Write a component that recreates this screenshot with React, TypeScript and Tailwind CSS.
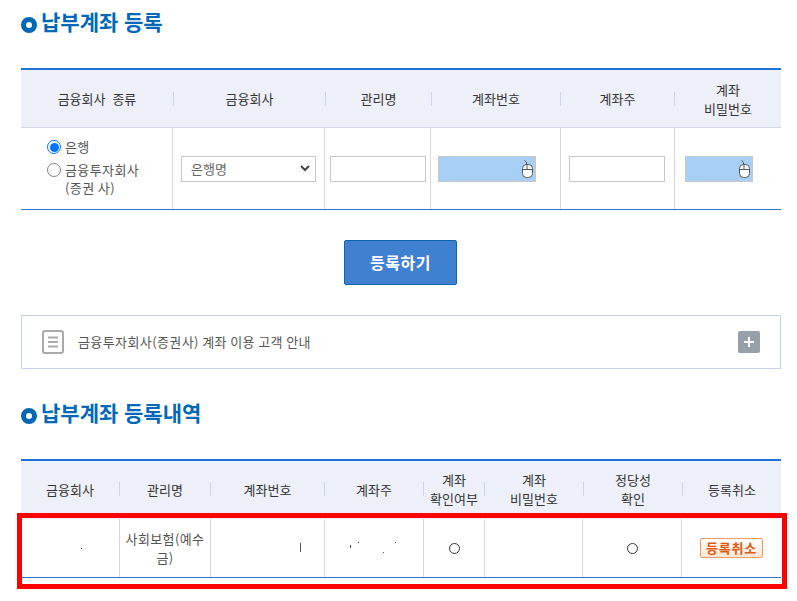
const font = { fontFamily: '"Noto Sans CJK KR", "Noto Sans", sans-serif' };

function Heading({ children }: { children: string }) {
  return (
    <h2 className="flex items-center text-[21px] font-bold leading-[30px] text-[#0068b7] [word-spacing:1px]">
      <span className="mr-[4px] mt-[8px] h-[16px] w-[16px] rounded-full border-[5px] border-[#0068b7]" />
      {children}
    </h2>
  );
}

function HeadCell({ children, first }: { children: React.ReactNode; first?: boolean }) {
  return (
    <div className="flex h-full items-center">
      {!first && <span className="h-[14px] w-px shrink-0 bg-[#ced5e8]" />}
      <div className="flex-1 text-center text-[13px] leading-[19px] text-[#333] [word-spacing:4px]">{children}</div>
    </div>
  );
}

function BodyCell({ children, first, className = "" }: { children?: React.ReactNode; first?: boolean; className?: string }) {
  return (
    <div className={`relative flex h-full items-center justify-center text-[13px] text-[#555] ${first ? "" : "border-l border-[#d8d8dc]"} ${className}`}>
      {children}
    </div>
  );
}

function MouseIcon() {
  return (
    <svg width="13" height="19" viewBox="0 0 13 19" fill="none" stroke="#555" strokeWidth="1" className="absolute right-[1px] top-[3px]">
      <path d="M5.5 4.5V3C5.5 1.5 4.5 1.5 3.5 0.5" />
      <rect x="1.5" y="4.5" width="10" height="13" rx="4" fill="#fff" />
      <path d="M1.5 9.5H11.5M6 4.5V9.5" />
    </svg>
  );
}

function SecureInput({ width }: { width: string }) {
  return (
    <div className={`relative h-[26px] border border-[#c8c8c8] bg-[#a8cff5] ${width}`}>
      <MouseIcon />
    </div>
  );
}

function TextInput({ width }: { width: string }) {
  return <div className={`h-[26px] border border-[#c8c8c8] bg-white ${width}`} />;
}

function Circle() {
  return <span className="h-[11px] w-[11px] rounded-full border border-[#333]" />;
}

// leftovers of the blanked out account data
function Speck({ className }: { className: string }) {
  return <span className={`absolute w-px bg-[#555] ${className}`} />;
}

export default function App() {
  return (
    <div style={font} className="relative h-[601px] w-[797px] overflow-hidden bg-white pl-[21px] pr-[16px]">
      <div className="pt-[6px]">
        <Heading>납부계좌 등록</Heading>
      </div>

      {/* registration form */}
      <div className="mt-[32px] border-y border-t-2 border-t-[#1f73d2] border-b-[#2d72c4]">
        <div className="grid h-[58px] grid-cols-[152px_152px_106px_129px_114px_107px] border-b border-[#d5d9e8] bg-[#edf0f8]">
          <HeadCell first>금융회사 종류</HeadCell>
          <HeadCell>금융회사</HeadCell>
          <HeadCell>관리명</HeadCell>
          <HeadCell>계좌번호</HeadCell>
          <HeadCell>계좌주</HeadCell>
          <HeadCell>
            계좌
            <br />
            비밀번호
          </HeadCell>
        </div>
        <div className="grid h-[81px] grid-cols-[151px_152px_106px_130px_114px_107px]">
          <BodyCell first className="!items-start !justify-start pl-[26px] pt-[10px]">
            <div className="text-[13px] leading-[18px] tracking-[0.4px] text-[#555]">
              <div className="flex items-center gap-[4px]">
                <span className="flex h-[14px] w-[14px] items-center justify-center rounded-full border-[1.5px] border-[#0075ff]">
                  <span className="h-[9px] w-[9px] rounded-full bg-[#0075ff]" />
                </span>
                은행
              </div>
              <div className="mt-[5px] flex items-center gap-[4px]">
                <span className="h-[14px] w-[14px] rounded-full border-[1.5px] border-[#858585]" />
                금융투자회사
              </div>
              <div className="pl-[18px]">(증권 사)</div>
            </div>
          </BodyCell>
          <BodyCell>
            <div className="flex h-[26px] w-[135px] items-center justify-between border border-[#c8c8c8] pl-[9px] pr-[5px] text-[13px] text-[#666]">
              은행명
              <svg width="10" height="7" viewBox="0 0 10 7" fill="none" stroke="#444" strokeWidth="2">
                <path d="M1 1l4 4 4-4" />
              </svg>
            </div>
          </BodyCell>
          <BodyCell>
            <TextInput width="w-[96px]" />
          </BodyCell>
          <BodyCell className="!justify-start pl-[7px]">
            <SecureInput width="w-[98px]" />
          </BodyCell>
          <BodyCell className="!justify-start pl-[8px]">
            <TextInput width="w-[96px]" />
          </BodyCell>
          <BodyCell className="!justify-start pl-[10px]">
            <SecureInput width="w-[68px]" />
          </BodyCell>
        </div>
      </div>

      <div className="mt-[30px] flex justify-center pr-[1px]">
        <button className="h-[45px] w-[113px] rounded-[2px] border border-[#0b66ad] bg-[#4080d0] pb-[2px] text-[16px] font-bold tracking-[0.5px] text-white">
          등록하기
        </button>
      </div>

      {/* notice accordion */}
      <div className="mt-[30px] flex h-[54px] items-center border border-[#c5d1e6] pl-[20px] pr-[20px]">
        <svg width="23" height="24" viewBox="0 0 23 24" fill="none" stroke="#aaa" strokeWidth="2">
          <rect x="1" y="1" width="20" height="22" rx="2" />
          <path d="M6 7.5H16M6 12H16M6 16.5H16" />
        </svg>
        <span className="ml-[13px] flex-1 pb-px text-[13px] tracking-[0.4px] text-[#555]">금융투자회사(증권사) 계좌 이용 고객 안내</span>
        <span className="flex h-[22px] w-[22px] items-center justify-center rounded-[2px] bg-[#979fa9]">
          <svg width="12" height="12" viewBox="0 0 12 12" stroke="#fff" strokeWidth="2">
            <path d="M6 1V11M1 6H11" />
          </svg>
        </span>
      </div>

      <div className="mt-[28px]">
        <Heading>납부계좌 등록내역</Heading>
      </div>

      {/* registered accounts */}
      <div className="mt-[32px] border-y border-t-2 border-t-[#1f73d2] border-b-[#2d72c4]">
        <div className="grid h-[58px] grid-cols-[98px_91px_114px_99px_61px_99px_99px_99px] bg-[#edf0f8] pb-[2px]">
          <HeadCell first>금융회사</HeadCell>
          <HeadCell>관리명</HeadCell>
          <HeadCell>계좌번호</HeadCell>
          <HeadCell>계좌주</HeadCell>
          <HeadCell>
            계좌
            <br />
            <span className="whitespace-nowrap">확인여부</span>
          </HeadCell>
          <HeadCell>
            계좌
            <br />
            비밀번호
          </HeadCell>
          <HeadCell>
            정당성
            <br />
            확인
          </HeadCell>
          <HeadCell>등록취소</HeadCell>
        </div>
        <div className="grid h-[58px] grid-cols-[98px_91px_114px_99px_61px_98px_99px_100px]">
          <BodyCell first>
            <Speck className="left-[60px] top-[29px] h-px" />
          </BodyCell>
          <BodyCell>
            <div className="px-[5px] pb-px text-center leading-[19px] tracking-[0.4px]">
              사회보험(예수
              <br />금)
            </div>
          </BodyCell>
          <BodyCell>
            <Speck className="left-[89px] top-[24px] h-[9px]" />
          </BodyCell>
          <BodyCell>
            <Speck className="left-[25px] top-[26px] h-[3px]" />
            <Speck className="left-[33px] top-[23px] h-px" />
            <Speck className="left-[58px] top-[33px] h-px" />
            <Speck className="left-[70px] top-[23px] h-px" />
          </BodyCell>
          <BodyCell>
            <Circle />
          </BodyCell>
          <BodyCell />
          <BodyCell>
            <Circle />
          </BodyCell>
          <BodyCell>
            <span className="flex h-[20px] w-[63px] items-center justify-center rounded-[2px] border border-[#ec9a5e] bg-gradient-to-b from-white to-[#fbe6d4] text-[13px] font-bold tracking-[0.8px] text-[#dd5a10]">
              등록취소
            </span>
          </BodyCell>
        </div>
      </div>

      {/* highlight drawn over the row */}
      <div className="pointer-events-none absolute left-[17px] top-[513px] h-[76px] w-[770px] border-[5px] border-[#ff0000]" />
    </div>
  );
}
